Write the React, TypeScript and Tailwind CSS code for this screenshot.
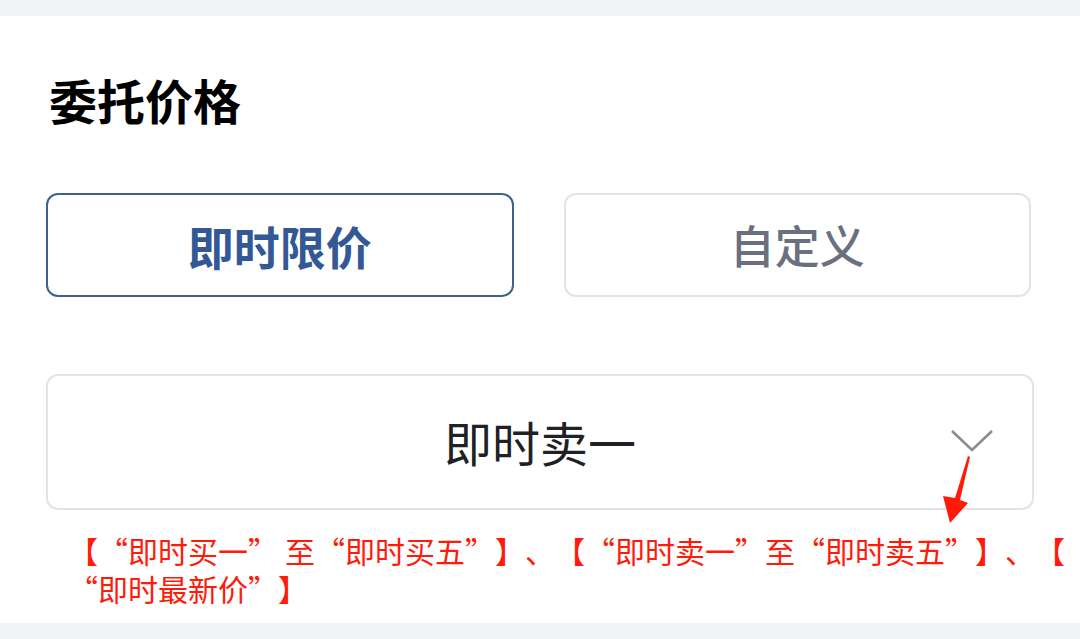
import React from "react";

const font = {
  fontFamily: '"Noto Sans CJK SC", "Noto Sans", sans-serif',
};

function Chevron() {
  return (
    <svg width="44" height="26" viewBox="0 0 44 26" className="absolute left-[902px] top-[52px]">
      <polyline points="2,3 22,22 42,3" fill="none" stroke="#8c8c8c" strokeWidth="2.6" />
    </svg>
  );
}

function RedArrow() {
  // callout arrow pointing from the chevron down to the note text
  return (
    <svg width="40" height="80" viewBox="0 0 40 80" className="absolute left-[935px] top-[452px] pointer-events-none">
      <polygon points="33,4 35,5 25,48 33,51 15,71 8,44 20,46" fill="#ff1a0a" />
    </svg>
  );
}

export default function App() {
  return (
    <div lang="zh-CN" className="w-[1080px] h-[639px] bg-[#f3f4f6] flex flex-col relative overflow-hidden" style={font}>
      <div className="h-[16px] shrink-0" />
      <div className="bg-white h-[607px] px-[46px] flex flex-col">
        <div className="pt-[53px] pl-[3px] text-[48px] leading-[60px] font-bold text-black">委托价格</div>

        <div className="mt-[64px] flex flex-row gap-[50px] pr-[3px]">
          <div className="flex-1 h-[104px] border-2 border-[#3f5f8f] rounded-[12px] flex items-center justify-center text-[46px] font-bold text-[#335896]">
            即时限价
          </div>
          <div className="flex-1 h-[104px] border-2 border-[#e3e3e3] rounded-[12px] flex items-center justify-center text-[45px] font-medium text-[#6b7080]">
            自定义
          </div>
        </div>

        <div className="mt-[77px] relative h-[136px] border-2 border-[#e3e3e3] rounded-[12px] flex items-center justify-center text-[48px] text-[#202124] pb-[3px]">
          即时卖一
          <Chevron />
        </div>

        <div className="mt-[21px] pl-[22px] -mr-[46px] text-[30px] leading-[38px] text-[#ff1a0a] whitespace-nowrap [text-spacing-trim:space-all] [font-feature-settings:'fwid']">
          <div>
            【“即时买一”<span className="inline-block w-[7px]" />至“即时买五”】、【“即时卖一”至“即时卖五”】、【
          </div>
          <div>“即时最新价”】</div>
        </div>
      </div>
      <RedArrow />
    </div>
  );
}
